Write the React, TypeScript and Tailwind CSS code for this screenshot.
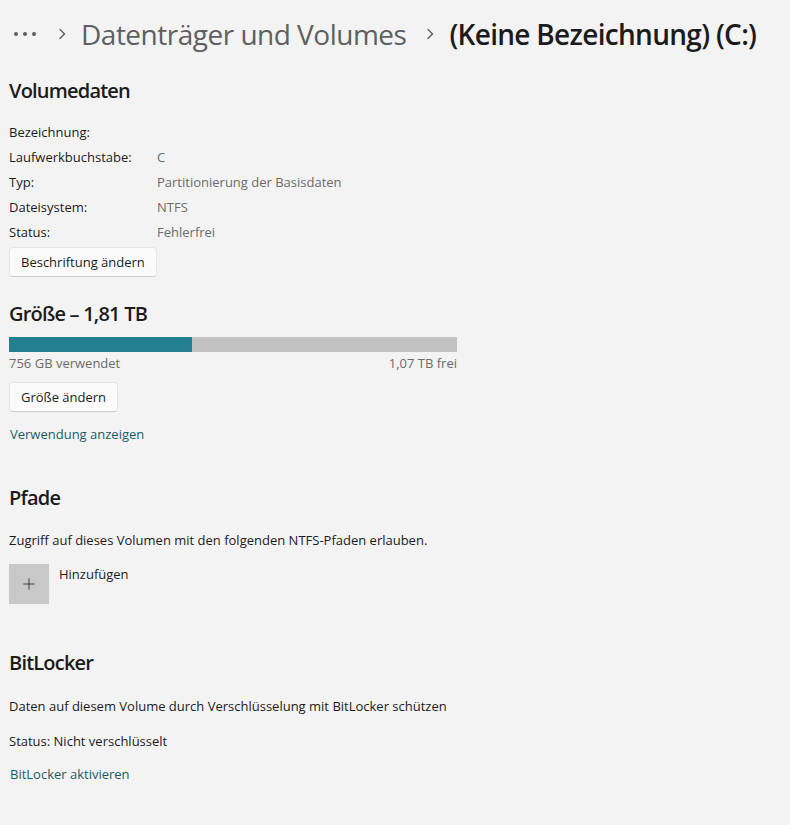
import { Plus } from 'lucide-react'

const details = [
  { label: 'Bezeichnung:', value: '' },
  { label: 'Laufwerkbuchstabe:', value: 'C' },
  { label: 'Typ:', value: 'Partitionierung der Basisdaten' },
  { label: 'Dateisystem:', value: 'NTFS' },
  { label: 'Status:', value: 'Fehlerfrei' },
]

const usedPercent = (756 / 1853) * 100

function Chevron() {
  return (
    <svg width="8" height="12" viewBox="0 0 8 12" className="text-[#5f5f5f]">
      <path d="M2 1.5 L6.5 6 L2 10.5" fill="none" stroke="currentColor" strokeWidth="1.4" strokeLinecap="round" />
    </svg>
  )
}

function WinButton({ children }: { children: React.ReactNode }) {
  return (
    <button className="h-[30px] px-[11px] bg-[#fbfbfb] border border-[#e5e5e5] border-b-[#cccccc] rounded-[4px] text-[13px] text-[#1b1b1b] leading-none">
      {children}
    </button>
  )
}

export default function App() {
  return (
    <div
      className="w-[790px] h-[825px] bg-[#f3f3f3] text-[#1b1b1b] overflow-hidden"
      style={{ fontFamily: '"Segoe UI", "Open Sans", sans-serif' }}
    >
      {/* Breadcrumb */}
      <div className="flex items-center h-[40px] mt-[14px] pl-[14px] text-[28px] leading-none">
        <span className="flex gap-[5px] items-center mr-[22px]">
          <span className="w-[4px] h-[4px] rounded-full bg-[#5f5f5f]" />
          <span className="w-[4px] h-[4px] rounded-full bg-[#5f5f5f]" />
          <span className="w-[4px] h-[4px] rounded-full bg-[#5f5f5f]" />
        </span>
        <Chevron />
        <span className="ml-[15px] text-[#5f5f5f] tracking-[-0.5px]">Datenträger und Volumes</span>
        <span className="ml-[20px]"><Chevron /></span>
        <span className="ml-[15px] font-semibold text-[#1b1b1b] tracking-[-0.7px]">(Keine Bezeichnung) (C:)</span>
      </div>

      <div className="px-[9px]">
        {/* Volumedaten */}
        <h2 className="mt-[23px] text-[20px] font-semibold leading-[28px] tracking-[-0.8px]">Volumedaten</h2>
        <div className="mt-[18px] flex flex-col text-[13px]">
          {details.map((row) => (
            <div key={row.label} className="flex h-[25px] items-start">
              <span className="w-[148px]">{row.label}</span>
              <span className="text-[#6b6b6b]">{row.value}</span>
            </div>
          ))}
        </div>
        <div className="-mt-[1px]">
          <WinButton>Beschriftung ändern</WinButton>
        </div>

        {/* Größe */}
        <h2 className="mt-[23px] text-[20px] font-semibold leading-[28px] tracking-[-0.8px]">Größe – 1,81 TB</h2>
        <div className="mt-[9px] w-[448px]">
          <div className="h-[15px] bg-[#c2c2c2]">
            <div className="h-full bg-[#238090]" style={{ width: `${usedPercent}%` }} />
          </div>
          <div className="flex justify-between text-[13px] text-[#6b6b6b] leading-[20px] mt-[1px]">
            <span>756 GB verwendet</span>
            <span>1,07 TB frei</span>
          </div>
        </div>
        <div className="mt-[9px]">
          <WinButton>Größe ändern</WinButton>
        </div>
        <a className="block mt-[12px] pl-[1px] text-[13px] text-[#1e5a68] leading-[20px]">Verwendung anzeigen</a>

        {/* Pfade */}
        <h2 className="mt-[40px] text-[20px] font-semibold leading-[28px] tracking-[-0.8px]">Pfade</h2>
        <p className="mt-[18px] text-[13px] leading-[20px]">
          Zugriff auf dieses Volumen mit den folgenden NTFS-Pfaden erlauben.
        </p>
        <div className="mt-[14px] flex items-start gap-[10px]">
          <div className="w-[40px] h-[40px] bg-[#c8c8c8] flex items-center justify-center">
            <Plus size={18} strokeWidth={1} className="text-[#111111]" />
          </div>
          <span className="text-[13px] leading-[20px]">Hinzufügen</span>
        </div>

        {/* BitLocker */}
        <h2 className="mt-[45px] text-[20px] font-semibold leading-[28px] tracking-[-0.8px]">BitLocker</h2>
        <p className="mt-[19px] text-[13px] leading-[20px]">
          Daten auf diesem Volume durch Verschlüsselung mit BitLocker schützen
        </p>
        <p className="mt-[15px] text-[13px] leading-[20px]">Status: Nicht verschlüsselt</p>
        <a className="block mt-[13px] pl-[1px] text-[13px] text-[#1e5a68] leading-[20px]">BitLocker aktivieren</a>
      </div>
    </div>
  )
}
